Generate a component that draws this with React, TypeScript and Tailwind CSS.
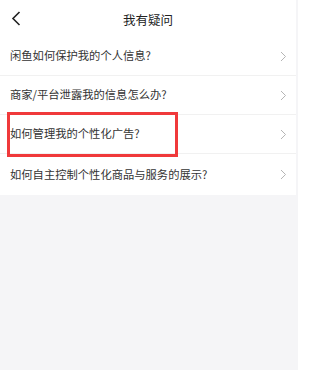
import React from "react";

const items = [
  "闲鱼如何保护我的个人信息?",
  "商家/平台泄露我的信息怎么办?",
  "如何管理我的个性化广告?",
  "如何自主控制个性化商品与服务的展示?",
];

function Chevron() {
  return (
    <svg width="7" height="11" viewBox="0 0 7 11" className="shrink-0">
      <path d="M1 1 L5.5 5.5 L1 10" fill="none" stroke="#b5b5b5" strokeWidth="1" />
    </svg>
  );
}

export default function App() {
  return (
    <div
      className="w-[298px] h-[370px] bg-[#f5f5f7] flex"
      style={{ fontFamily: '"Noto Sans CJK SC", "Noto Sans", sans-serif' }}
    >
      <div className="w-[296px] h-[195px] bg-white flex flex-col">
        <div className="h-[37px] grid grid-cols-[1fr_auto_1fr] items-center">
          <div className="pl-[11px] flex items-center">
            <svg width="10" height="15" viewBox="0 0 10 15">
              <path d="M8.5 1 L2 7.5 L8.5 14" fill="none" stroke="#222" strokeWidth="1.6" />
            </svg>
          </div>
          <div className="text-[12.5px] text-[#222] leading-none pt-[4px]">我有疑问</div>
          <div />
        </div>
        {items.map((t, i) => (
          <div
            key={i}
            className={`relative flex items-center justify-between pl-[10px] pr-[9px] ${
              i === 3 ? "h-[41px]" : "h-[39px] border-b border-[#f1f1f1]"
            }`}
          >
            <span className="text-[11.3px] text-[#333] leading-none">{t}</span>
            <Chevron />
            {i === 2 && (
              <div className="absolute left-[7px] top-[-3px] w-[171px] h-[45px] border-[3px] border-[#f0393b]" />
            )}
          </div>
        ))}
      </div>
    </div>
  );
}
